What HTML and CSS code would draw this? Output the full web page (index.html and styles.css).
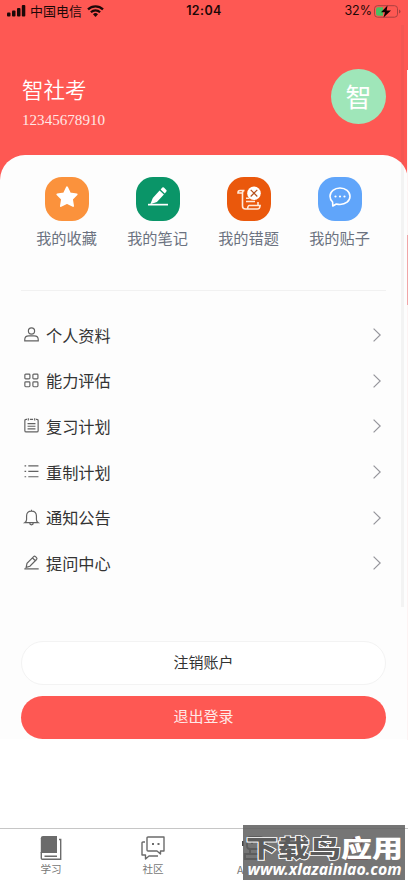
FILE: index.html
```
<!DOCTYPE html>
<html lang="zh-CN">
<head>
<meta charset="utf-8">
<title>智社考</title>
<link rel="stylesheet" href="styles.css">
</head>
<body>
<div class="app">
  <header class="hero">
    <div class="status">
      <div class="carrier">
        <svg width="19" height="12" viewBox="0 0 19 12"><rect x="0" y="7.5" width="3.5" height="4" rx="1"/><rect x="5" y="5.5" width="3.5" height="6" rx="1"/><rect x="10" y="3" width="3.5" height="8.500" rx="1"/><rect x="14.800" y="0" width="3.500" height="11.500" rx="1"/></svg>
        <span>中国电信</span>
        <svg class="wifi" width="17" height="12" viewBox="0 0 17 12" fill="none" stroke="#1c0808" stroke-width="2.200"><path d="M1 4.400a10.600 10.600 0 0 1 15 0M3.900 7.300a6.500 6.500 0 0 1 9.200 0"/><path d="M6 9.300a3.600 3.600 0 0 1 5 0L8.500 12z" fill="#1c0808" stroke="none"/></svg>
      </div>
      <b class="clock">12:04</b>
      <div class="power">
        <span>32%</span>
        <svg width="27" height="13" viewBox="0 0 27 13"><rect x=".5" y=".7" width="23" height="11.500" rx="3" fill="none" stroke="#a94140"/><path d="M4 2.200h5v8.500H4a2 2 0 0 1-2-2V4.200a2 2 0 0 1 2-2z" fill="#4bbd62"/><path d="M25 4.500q1.500.5 1.500 2t-1.500 2z" fill="#a94140"/><path d="M13.500.5 7 7.200h4L9.500 12.500 17 5.500h-4.300z" fill="#100"/></svg>
      </div>
    </div>
    <div class="profile">
      <div>
        <h1>智社考</h1>
        <p>12345678910</p>
      </div>
      <div class="avatar">智</div>
    </div>
  </header>

  <main class="sheet">
    <nav class="shortcuts">
      <a><i class="tile orange"><svg width="24" height="24" viewBox="0 0 24 24"><path d="M12 2.200 15 8.300 21.700 9.300 17 14.200 18.100 21 12 18 5.900 21 7 14.200 2.300 9.300 9 8.300z" fill="#fff" stroke="#fff" stroke-width="1.800" stroke-linejoin="round"/></svg></i>我的收藏</a>
      <a><i class="tile green"><svg width="24" height="24" viewBox="0 0 24 24" fill="#fff"><path d="M4.300 19.300 6.800 13 13.600 5.600l4.300 4-7 7.300zM14.600 4.500l1.700-1.900q.8-.6 1.600 0l2.400 2.300q.8.800.1 1.600l-1.600 1.900z"/><path d="M2 18.800h20v1.700H2z"/></svg></i>我的笔记</a>
      <a><i class="tile rust"><svg width="26" height="26" viewBox="0 0 26 26" fill="none" stroke="#ffe9da" stroke-width="1.600"><path d="M8.500 4.500H4Q2 4.500 2 7h4.500M8.500 4.500q-2 0-2 2.500v13q0 3 3 3h11.800q2.600 0 2.800-3.500h-11q-1 0-1.500 3M22 19v-3M10 12.300h3.500M10 15.500h9"/><circle cx="18" cy="7.200" r="6.800" fill="#fff" stroke="none"/><path d="m14.700 3.900 6.600 6.600m0-6.600-6.600 6.600" stroke="#b4501c" stroke-width="1.200"/></svg></i>我的错题</a>
      <a><i class="tile blue"><svg width="24" height="24" viewBox="0 0 24 24"><path d="M4.600 17Q2 14.500 2 11.300C2 6.500 6.500 3 12 3s10 3.500 10 8.300-4.500 8.200-10 8.200q-2 0-3.700-.5L4.800 21z" fill="none" stroke="#fff" stroke-width="1.600" stroke-linejoin="round"/><g fill="#fff"><circle cx="7.500" cy="11.500" r="1.100"/><circle cx="12" cy="11.500" r="1.100"/><circle cx="16.500" cy="11.500" r="1.100"/></g></svg></i>我的贴子</a>
    </nav>

    <ul class="menu">
      <li><svg class="icon" viewBox="0 0 14 14"><circle cx="7" cy="3.700" r="2.900"/><path d="M.7 13v-1.200Q.7 8.200 4.500 8.200h5q3.800 0 3.800 3.600V13z"/></svg><span>个人资料</span><svg class="chevron" viewBox="0 0 8 14"><path d="m.6.6 6.600 6.400-6.600 6.400"/></svg></li>
      <li><svg class="icon" viewBox="0 0 14 14"><rect x=".8" y="1" width="4.700" height="4.500" rx=".8"/><rect x="8.300" y="1" width="4.700" height="4.500" rx=".8"/><rect x=".8" y="8.300" width="4.700" height="4.500" rx=".8"/><rect x="8.300" y="8.300" width="4.700" height="4.500" rx=".8"/></svg><span>能力评估</span><svg class="chevron" viewBox="0 0 8 14"><path d="m.6.6 6.600 6.400-6.600 6.400"/></svg></li>
      <li><svg class="icon" viewBox="0 0 14 14"><path d="M2.800 1.300H2Q.8 1.300.8 2.500v9.300Q.8 13 2 13h10q1.200 0 1.200-1.200V2.500q0-1.200-1.200-1.200h-.8M5.500 1.300h3M4 .3v2M10 .3v2M3.300 5.200h7.400M3.300 7.700h7.400M3.300 10.200h7.400"/></svg><span>复习计划</span><svg class="chevron" viewBox="0 0 8 14"><path d="m.6.6 6.600 6.400-6.600 6.400"/></svg></li>
      <li><svg class="icon" viewBox="0 0 14 14"><path d="M4 1.700h9.500M4 6.800h9.500M4 11.900h9.500M.5 1.700H2M.5 6.800H2M.5 11.900H2"/></svg><span>重制计划</span><svg class="chevron" viewBox="0 0 8 14"><path d="m.6.6 6.600 6.400-6.600 6.400"/></svg></li>
      <li><svg class="icon" viewBox="0 0 14 14"><path d="M.7 11.800q1.700-1.200 1.700-3V5.600Q2.400 1 7 1t4.600 4.600v3.200q0 1.800 1.700 3zM7 1V-.2M5.300 12q0 1.800 1.700 1.800T8.700 12"/></svg><span>通知公告</span><svg class="chevron" viewBox="0 0 8 14"><path d="m.6.6 6.600 6.400-6.600 6.400"/></svg></li>
      <li><svg class="icon" viewBox="0 0 14 14"><path d="m2 11.500.8-3.700L9 1.500q.8-.8 1.700 0l1 1q.8.800 0 1.700l-6.200 6.300zM8 2.800l2.600 2.600M.3 13h13.400"/></svg><span>提问中心</span><svg class="chevron" viewBox="0 0 8 14"><path d="m.6.6 6.600 6.400-6.600 6.400"/></svg></li>
    </ul>

    <div class="actions">
      <button class="btn plain">注销账户</button>
      <button class="btn primary">退出登录</button>
    </div>
  </main>

  <footer class="tabs">
    <a><svg width="22" height="24" viewBox="0 0 22 24"><path d="M3 0h14v17H.8V2.200Q.8 0 3 0z" fill="#6b6b6b"/><path d="M1.300 16v6.300q0 1 1 1h18.400V3.500H19M4.500 20.200H17" fill="none" stroke="#6b6b6b" stroke-width="1.400"/></svg>学习</a>
    <a><svg width="24" height="24" viewBox="0 0 24 24" fill="none" stroke="#6b6b6b" stroke-width="1.400" stroke-linejoin="round"><path d="M7 1h16v14h-3.500v3L16 15H7q-1 0-1-1V2q0-1 1-1zM4 6H2q-1 0-1 1v12h3.500v4l3.500-3h9"/><path d="M11 8h2M16.500 8h2" stroke-width="2"/></svg>社区</a>
    <a class="ai"><svg width="26" height="24" viewBox="0 0 26 24" fill="none" stroke="#333" stroke-width="1.800"><rect x="5" y="1" width="16" height="12" rx="3"/><path d="M1 5v5M25 5v5M9 7h2M15 7h2M8 13v5M18 13v5M3 23v-5h20v5z"/></svg><span>A</span></a>
    <a class="current"><svg width="24" height="24" viewBox="0 0 24 24" fill="none" stroke="#f00" stroke-width="1.600"><circle cx="12" cy="6" r="5"/><path d="M2 23q0-10 10-10t10 10z"/></svg></a>
  </footer>

  <div class="scrollbar"></div>
  <div class="edge"><div class="edge-mark"></div></div>
  <div class="badge">
    <svg width="162" height="55" viewBox="0 0 162 55">
      <g transform="translate(0 31.500) scale(1 .86)">
        <text class="outlined" x="3" y="0" textLength="95" lengthAdjust="spacingAndGlyphs">下载鸟</text>
        <text class="solid" x="98" y="0" textLength="62" lengthAdjust="spacingAndGlyphs">应用</text>
      </g>
      <text class="site" x="4.500" y="50" textLength="154" lengthAdjust="spacingAndGlyphs">www.xlazainlao.com</text>
    </svg>
  </div>
</div>
</body>
</html>
```
FILE: styles.css
```
* { box-sizing: border-box; }
body {
  margin: 0;
  background: #fff;
  font-family: "Noto Sans CJK SC", sans-serif;
  color: #333;
}
.app {
  position: relative;
  display: flex;
  flex-direction: column;
  width: 408px;
  height: 883px;
  overflow: hidden;
}
.hero {
  height: 180px;
  flex: none;
  background: #fe5853;
}
.status {
  display: grid;
  grid-template-columns: 1fr auto 1fr;
  align-items: center;
  height: 22px;
  padding: 0 7px;
  font: 12px/22px Inter, "Noto Sans CJK SC", sans-serif;
  color: #1c0808;
}
.status svg { display: block; }
.carrier { display: flex; align-items: center; gap: 4px; fill: #1c0808; font-size: 13px; font-weight: 400; }
.wifi { margin-left: 1px; }
.clock { font-size: 12.5px; font-weight: 600; letter-spacing: .4px; }
.power { display: flex; align-items: center; justify-content: flex-end; gap: 2px; font-size: 12.5px; }
.profile {
  display: flex;
  justify-content: space-between;
  padding: 47px 22px 0;
  color: #fff;
}
.profile h1 { margin: 4px 0 0; font-size: 21.5px; line-height: 32px; font-weight: 350; }
.profile p { margin: 5px 0 0; font: 15.1px/20px "Liberation Serif", serif; color: #ffe7e5; }
.avatar {
  width: 55px;
  height: 55px;
  border-radius: 50%;
  background: #9fe6b9;
  font-size: 26px;
  line-height: 53px;
  text-align: center;
}
.sheet {
  flex: none;
  height: 584px;
  margin-top: -25px;
  padding: 22px 22px 0;
  border-radius: 25px 25px 0 0;
  background: #fdfdfd;
}
.shortcuts {
  display: grid;
  grid-template-columns: repeat(4, 91px);
  height: 114px;
  margin-left: -1px;
  border-bottom: 1px solid #f1f1f1;
}
.shortcuts a {
  display: flex;
  flex-direction: column;
  align-items: center;
  gap: 4px;
  font-size: 15.2px;
  line-height: 24px;
  color: #6b7280;
}
.tile {
  display: flex;
  align-items: center;
  justify-content: center;
  width: 44px;
  height: 44px;
  padding-bottom: 5px;
  border-radius: 17px;
}
.orange { background: #fb923c; }
.green { background: #0a9568; }
.rust { background: #ea580c; padding: 0 0 1px; }
.blue { background: #60a5fa; }
.menu { list-style: none; margin: 21px 0 0; padding: 0; }
.menu li { display: flex; align-items: center; height: 45.6px; padding: 0 5px 0 2px; font-size: 16.2px; }
.menu span { flex: 1; margin-left: 7px; line-height: 24px; }
.icon { width: 15px; height: 15px; overflow: visible; fill: none; stroke: #626262; stroke-width: 1.1; }
.chevron { width: 8px; height: 14px; margin-top: 1px; fill: none; stroke: #95959b; stroke-width: 1.2; }
.actions { display: flex; flex-direction: column; gap: 11px; margin: 55px 0 0 -1px; }
.btn {
  height: 44px;
  border: 1px solid #f3f3f3;
  border-radius: 22px;
  padding: 0 0 2px;
  background: #fff;
  font: 15px/22px "Noto Sans CJK SC", sans-serif;
  color: #333;
}
.primary { height: 43px; border: 0; background: #fe5853; color: #ffe9e8; }
.tabs {
  display: grid;
  grid-template-columns: repeat(4, 1fr);
  height: 55px;
  margin-top: auto;
  border-top: 1px solid #c6c6c6;
}
.tabs a {
  display: flex;
  flex-direction: column;
  align-items: center;
  padding-top: 7px;
  font-size: 10.6px;
  line-height: 18px;
  color: #777;
}
.tabs svg { flex: none; }
.ai span { align-self: flex-start; margin-left: 33px; padding-top: 1px; }
.tabs .current { color: #fd5753; }
.scrollbar { position: absolute; left: 401px; top: 25px; width: 3px; height: 582px; background: rgba(70, 70, 70, .055); }
.edge { position: absolute; left: 407px; top: 70px; width: 1px; height: 670px; padding-top: 165px; background: #fcf3f3; }
.edge-mark { height: 70px; background: #f1a5a7; }
.badge { position: absolute; left: 243px; top: 825px; width: 162px; height: 55px; background: rgba(98, 98, 98, .88); }
.badge svg { display: block; }
.badge text { font-family: "Noto Sans CJK SC", sans-serif; font-weight: 900; }
.badge .outlined { font-size: 28px; fill: #5c5c5c; stroke: #fff; stroke-width: 2px; paint-order: stroke; }
.badge .solid { font-size: 28px; fill: #fff; }
.badge .site { font: italic 700 16px "Noto Sans", sans-serif; fill: #fff; }
```
